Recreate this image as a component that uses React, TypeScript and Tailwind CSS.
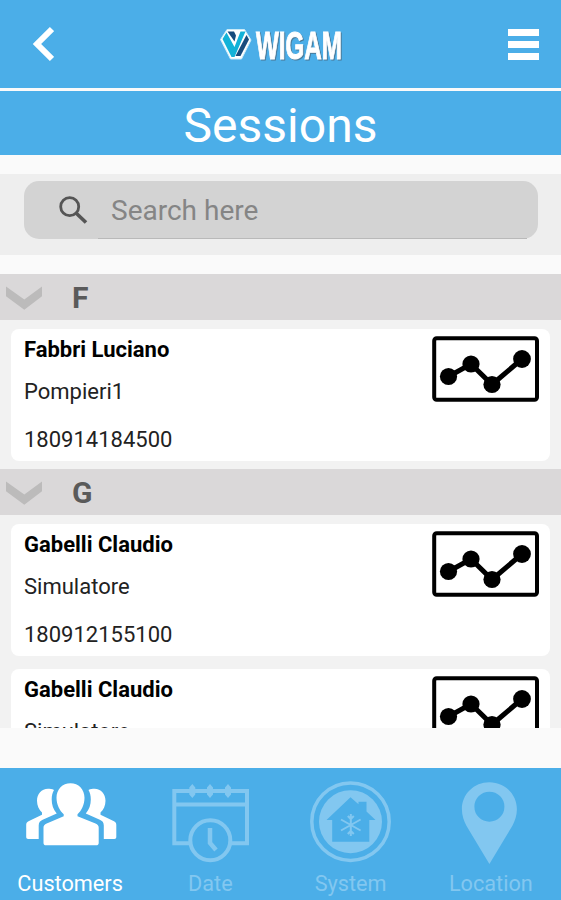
import { useState } from 'react';
import type { ReactNode } from 'react';

type Session = {
  customer: string;
  system: string;
  code: string;
};

const groups: { letter: string; sessions: Session[] }[] = [
  {
    letter: 'F',
    sessions: [{ customer: 'Fabbri Luciano', system: 'Pompieri1', code: '180914184500' }]
  },
  {
    letter: 'G',
    sessions: [
      { customer: 'Gabelli Claudio', system: 'Simulatore', code: '180912155100' },
      { customer: 'Gabelli Claudio', system: 'Simulatore', code: '180912154300' }
    ]
  }
];

function Logo() {
  return (
    <svg className="ml-1 h-[52px] w-[130px] overflow-visible" viewBox="0 0 130 52">
      <path d="M9 11.500h17.500L33 22 23.500 41h-11L2.500 21.500z" fill="#fff" stroke="#c9ebf8" strokeLinejoin="round" />
      <path d="M9.500 13.500h6.500l2 4-1.500 6z" fill="#174b7d" />
      <path d="M4.500 21l4-6.500 8 14.500 6-15.500h5L16.500 39h-3z" fill="#12b2d8" />
      <path d="M28.500 17l2.500 4.500L22.500 38h-5z" fill="#174b7d" />
      <text
        className="[paint-order:stroke] drop-shadow-[1px_1px_0_#4a7a99]"
        x="38"
        y="41"
        textLength="86"
        lengthAdjust="spacingAndGlyphs"
        fontFamily="'Liberation Sans', sans-serif"
        fontSize="39"
        fontWeight="700"
        fill="#fff"
        stroke="#fff"
        strokeWidth="1"
      >
        WIGAM
      </text>
    </svg>
  );
}

function ChartIcon() {
  return (
    <svg className="h-[66px] w-[107px] shrink-0" viewBox="0 0 107 66">
      <rect x="2.200" y="2.200" width="102.800" height="61.500" rx="2.500" fill="none" stroke="#000" strokeWidth="4" />
      <path d="M16.500 40.500L39 28l21 20.500L90 23" fill="none" stroke="#000" strokeWidth="5" />
      <circle cx="16.500" cy="40.500" r="8.600" />
      <circle cx="39" cy="28" r="8.600" />
      <circle cx="60" cy="48.500" r="8.600" />
      <circle cx="90" cy="23" r="8.900" />
    </svg>
  );
}

function SessionCard({ session }: { session: Session }) {
  return (
    <div className="mx-[11px] flex h-[132px] justify-between rounded-lg bg-white pl-[13px] pr-[11px] pt-[7px] text-[22px] text-[#222]">
      <div>
        <div className="h-[42px] leading-[28px] font-bold text-black">{session.customer}</div>
        <div className="h-[48px] leading-[28px]">{session.system}</div>
        <div className="leading-[28px]">{session.code}</div>
      </div>
      <ChartIcon />
    </div>
  );
}

function GroupHeader({ letter }: { letter: string }) {
  return (
    <div className="flex h-[46px] items-center bg-[#dad8d9] pl-1.5 text-[30px] font-bold text-[#5a5a5a]">
      <svg className="h-[46px] w-9" viewBox="0 0 36 46">
        <path d="M0 12.500l18.300 13L36 12.500v9.700L18.300 35.700 0 22.200z" fill="#bcbbbb" />
      </svg>
      <span className="pl-[30px]">{letter}</span>
    </div>
  );
}

const tabs: { name: string; icon: ReactNode }[] = [
  {
    name: 'Customers',
    icon: (
      <g fill="currentColor">
        <path d="M70.500 15.300c8 0 14 6 14 14.500 0 7-3 13-7 16.500v2l18 7.200c2.200 1 3.200 2 3.200 4V75c0 1.500-1 2.300-2.500 2.300H46c-1.500 0-2.500-.8-2.500-2.300V59.500c0-2 1-3 3.200-4l17-7.200v-2c-4-3.500-7.200-9.500-7.200-16.500 0-8.500 6-14.500 14-14.500z" />
        <path id="side" d="M54 22c-2-1-4-1.200-6-1.200-6.500 0-11 5-11 12 0 5 2 9 5 11.700v2.300l-13.500 6.500c-1.700.9-2.300 2-2.300 3.700v12c0 1.300.7 2 2 2h10.500V57.500c0-3 1.500-4.700 4-5.700l14-6.300c-3.500-4-5-9-5-14 0-4 .8-7 2.300-9.500z" />
        <use href="#side" transform="matrix(-1 0 0 1 142.500 0)" />
      </g>
    )
  },
  {
    name: 'Date',
    icon: (
      <g fill="none" stroke="currentColor" strokeWidth="4">
        <path d="M50 75.300H34.300V23h72.700v52.300H91M34 36.500h73" />
        <circle cx="70.300" cy="72.300" r="20" />
        <path d="M70 60v15l6 7" strokeWidth="4.500" />
        <path
          d="M52.300 16l3 3.500v7l-3 3.500-3-3.500v-7zM70 16l3 3.500v7L70 30l-3-3.500v-7zM88 16l3 3.500v7L88 30l-3-3.500v-7z"
          fill="currentColor"
          stroke="none"
        />
      </g>
    )
  },
  {
    name: 'System',
    icon: (
      <g fill="none" stroke="currentColor">
        <circle cx="69.500" cy="53.700" r="38.700" strokeWidth="3.500" />
        <circle cx="69.500" cy="53.700" r="31.500" fill="currentColor" stroke="none" />
        <path d="M69.500 29.300l8 7v-2.600h8V43.500l9 8.500h-6.200v21.700H51.200V52H45.500z" fill="#4baee8" stroke="none" />
        <path
          d="M69.800 46v22M60 51.500l19.600 11M79.600 51.500L60 62.500M66.800 48l3 3 3-3M66.800 66l3-3 3 3"
          strokeWidth="2"
        />
      </g>
    )
  },
  {
    name: 'Location',
    icon: (
      <path
        fill="currentColor"
        fillRule="evenodd"
        d="M68.400 14.300c15.500 0 27.500 12 27.500 27 0 6-2 11.500-4.500 16.500L68.400 96 45.400 57.800c-2.500-5-4.500-10.500-4.500-16.500 0-15 12-27 27.500-27zM68.400 23.700a15 15 0 1 0 0 30 15 15 0 1 0 0-30z"
      />
    )
  }
];

export default function App() {
  const [activeTab, setActiveTab] = useState('Customers');

  return (
    <div className="flex h-[900px] w-[561px] flex-col overflow-hidden bg-[#fafafa] font-[Roboto,sans-serif]">
      <header className="flex h-[88px] shrink-0 items-center justify-between bg-[#4baee8] pl-8 pr-[22px]">
        <svg className="h-9 w-[22px]" viewBox="0 0 22 36">
          <path d="M20 3L5 18l15 15" fill="none" stroke="#fff" strokeWidth="6" />
        </svg>
        <Logo />
        <div className="flex flex-col gap-[5px]">
          <div className="h-[7px] w-[31px] bg-white" />
          <div className="h-[7px] w-[31px] bg-white" />
          <div className="h-[7px] w-[31px] bg-white" />
        </div>
      </header>
      <h1 className="mt-[3px] h-16 shrink-0 bg-[#4baee8] text-center text-[48px] leading-[70px] text-white">
        Sessions
      </h1>

      <div className="mt-[19px] h-[81px] shrink-0 bg-[#eee] pl-6 pr-[23px] pt-[7px]">
        <div className="flex h-[58px] rounded-[15px] bg-[#d3d3d3] pl-[35px] pr-[11px]">
          <svg className="mt-[14px] h-[30px] w-[39px]" viewBox="0 0 39 30">
            <circle cx="10.700" cy="11.700" r="9" fill="none" stroke="#555" strokeWidth="2.800" />
            <path d="M17 18l10 9.500" stroke="#555" strokeWidth="3.600" />
          </svg>
          <div className="flex-1 border-b border-[#b9b9b9] pl-[13px] text-[28px] leading-[60px] text-[#858585]">
            Search here
          </div>
        </div>
      </div>

      <main className="mt-[19px] h-[454px] shrink-0 overflow-hidden bg-[#f2f2f2]">
        {groups.map((group) => (
          <section key={group.letter} className="mb-2">
            <GroupHeader letter={group.letter} />
            <div className="flex flex-col gap-[13px] pt-[9px]">
              {group.sessions.map((session) => (
                <SessionCard key={session.code} session={session} />
              ))}
            </div>
          </section>
        ))}
      </main>

      <nav className="mt-10 grid h-[132px] shrink-0 grid-cols-4 bg-[#4baee8]">
        {tabs.map((tab) => (
          <button
            key={tab.name}
            className={`flex flex-col items-center text-[21.7px] leading-8 ${activeTab === tab.name ? 'text-white' : 'text-[#82c7f0]'}`}
            onClick={() => setActiveTab(tab.name)}
          >
            <svg className="h-[100px] w-[140px]" viewBox="0 0 140 100">
              {tab.icon}
            </svg>
            {tab.name}
          </button>
        ))}
      </nav>
    </div>
  );
}
